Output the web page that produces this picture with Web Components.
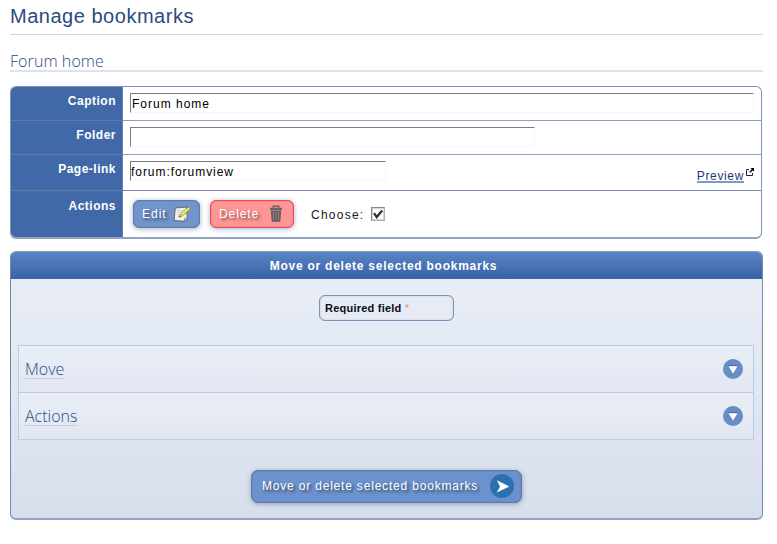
<!DOCTYPE html>
<html lang="en">
<head>
<meta charset="utf-8">
<title>Manage bookmarks</title>
<style>
html,body{margin:0;background:#fff}
body{width:777px;height:544px;overflow:hidden;font:12px/14px "Liberation Sans",Arial,sans-serif;color:#000}
</style>
</head>
<body>
<bookmark-page></bookmark-page>
<script>
function define(name, html) {
  const t = document.createElement('template');
  t.innerHTML = html;
  customElements.define(name, class extends HTMLElement {
    constructor() {
      super();
      this.attachShadow({mode: 'open'}).append(t.content.cloneNode(true));
    }
  });
}

define('page-title', `<style>
:host{display:block;box-sizing:border-box;height:35px;padding-top:4px;border-bottom:1px solid #c9d6ea;font-size:20px;line-height:24px;letter-spacing:.52px;color:#2b4b80}
</style><slot></slot>`);

define('section-title', `<style>
:host{display:block;box-sizing:border-box;height:20px;margin-top:17px;border-bottom:2px solid #dde2f1;font:300 16px/19px "Open Sans","Noto Sans",sans-serif;letter-spacing:.08px;color:#2b4b80}
</style><slot></slot>`);

define('field-table', `<style>
:host{display:block;box-sizing:border-box;width:752px;height:153px;margin-top:14px;border:1px solid #7f94b9;border-bottom:2px solid #91a3c3;border-radius:6px;overflow:hidden}
</style><slot></slot>`);

define('field-row', `<style>
:host{display:flex;box-sizing:border-box;height:34px;border-bottom:1px solid #8fa1c0}
:host([tall]){height:36px;border-bottom-color:#7388ae}
:host([last]){height:47px;border:0}
.label{box-sizing:border-box;flex:0 0 112px;background:#4169a8;border-right:1px solid #647ea8;color:#fff;font-weight:bold;text-align:right;padding:7px 6px 0 0;letter-spacing:.5px;box-shadow:0 1px #60799f}
:host([last]) .label{padding-top:8px;box-shadow:none}
.value{flex:1;display:flex;align-items:flex-start;padding:6px 7px 0 7px;min-width:0}
:host([last]) .value{padding:9px 0 0 10px}
</style><div class="label"><slot name="label"></slot></div><div class="value"><slot></slot></div>`);

define('text-field', `<style>
:host{display:block;flex:none;box-sizing:border-box;height:20px;padding:3px 0 0 1px;border:1px solid #f8f8f8;border-top-color:#7d7d7d;border-left-color:#7d7d7d;letter-spacing:1px;white-space:nowrap}
</style><slot></slot>`);

define('preview-link', `<style>
:host{display:flex;margin-left:auto;padding-top:7px;color:#1c3b76;letter-spacing:.65px}
span{height:12px;padding-top:1px;border-bottom:2px solid #8199c0}
svg{width:8px;height:8px;margin-left:2px}
</style><span><slot></slot></span><svg viewBox="0 0 8 8"><path d="M3 1.5H.5V7.5H6.5V5" fill="none" stroke="#222"/><path d="M4.5 0H8V3.5L6.8 2.4 4.2 4.8 3.3 3.9 5.7 1.2Z"/></svg>`);

define('action-button', `<style>
:host{display:flex;align-items:center;box-sizing:border-box;height:28px;padding:0 8px;justify-content:space-between;background:#7194cd;border:1px solid #647aa0;border-radius:6px;color:#fff;letter-spacing:1px;text-shadow:2px 2px 3px rgba(0,0,0,.55);box-shadow:0 1px 5px rgba(70,95,150,.5),inset 0 0 1px #53688f;white-space:nowrap}
:host([danger]){background:#ff9696;border-color:#e84a5a;letter-spacing:.9px;box-shadow:0 1px 5px rgba(70,95,150,.5),inset 0 0 1px #e02a40}
:host([large]){height:33px;background:#6b92cc;letter-spacing:.81px;padding:0 7px 1px 10px;border-radius:7px}
.text{display:block}
</style><span class="text"><slot></slot></span><slot name="icon"></slot>`);

define('icon-note', `<style>:host{display:block;width:18px;height:18px}svg{display:block}</style>
<svg width="18" height="18" viewBox="0 0 18 18"><path d="M2.2 3 13.5 2 14.3 14.8 11.5 16.3 1.2 15.5Z" fill="#f2f3f0" stroke="#5f6670"/><path d="M4 5.5 11 5M4 7.5 9 7.2M4 9.7 8 9.5M4 12 9 12" stroke="#cfd0cf"/><path d="M11 16.2 11.5 12.9 14.8 14.5Z" fill="#b7bcbf" stroke="#62676d" stroke-width=".5"/><path d="M6.2 12.2 7.6 8.5 15.2 2.2 17.3 4.3 9.6 10.8Z" fill="#dfdc35" stroke="#84852a" stroke-width=".6"/><path d="M8.3 9.3 16.2 3" stroke="#fffb91"/><path d="M15 2.3 16.2 1.4 17.8 3.3 17 4.4Z" fill="#999"/><path d="M6.2 12.2 6.7 10.8 7.7 11.5Z" fill="#222"/></svg>`);

define('icon-trash', `<style>:host{display:block;width:16px;height:18px}svg{display:block}</style>
<svg width="16" height="18" viewBox="0 0 16 18"><path d="M5.2 3V1.2H10.8V3" fill="none" stroke="#5e5a5c" stroke-width="1.2"/><path d="M2 2.8H14V5H2Z" fill="#686466"/><path d="M3 5.5H13L12.3 16.8H3.7Z" fill="#5c595b"/><path d="M5.4 6.5V15.5M8 6.5V15.5M10.6 6.5V15.5" stroke="#9c8789"/></svg>`);

define('icon-go', `<style>:host{display:block;width:24px;height:24px}svg{display:block}</style>
<svg width="24" height="24" viewBox="0 0 24 24"><circle cx="12" cy="12" r="12" fill="#2c71ae"/><path d="M6.8 6.3 19.3 12.5 6.8 18.5 10 12.5Z" fill="#fff"/></svg>`);

define('check-box', `<style>
:host{display:block;box-sizing:border-box;width:14px;height:14px;border:1px solid #888;border-right-color:#b1b1b1;border-bottom-color:#b1b1b1;background:#fff;box-shadow:inset 0 0 0 1px #d5d5d3}
svg{display:block}
</style><svg width="12" height="12" viewBox="0 0 12 12"><path d="M2 5.2 4.7 9 10.2 2.4" fill="none" stroke="#303030" stroke-width="2.3"/></svg>`);

define('action-panel', `<style>
:host{display:block;box-sizing:border-box;width:753px;height:269px;margin-top:12px;border:1px solid #7189b2;border-top-color:#8e9cb2;border-bottom:2px solid #91a3c2;border-radius:6px;background:linear-gradient(#e8ecf5 27px,#e2e9f3 40%,#d8dfec);overflow:hidden}
header{box-sizing:border-box;height:27px;padding:7px 6px 0 0;background:linear-gradient(#5885c5,#3961a5);color:#fff;font-weight:bold;text-align:center;letter-spacing:.75px}
.body{display:flex;flex-direction:column;padding:16px 8px 0 7px}
</style><header><slot name="title"></slot></header><div class="body"><slot></slot></div>`);

define('required-note', `<style>
:host{display:block;box-sizing:border-box;width:135px;height:26px;margin-left:301px;padding:5px 5px 0;border:1px solid #7e92b5;box-shadow:inset 0 0 1px #7e92b5;border-radius:6px;font-size:11px;font-weight:bold;letter-spacing:.23px;color:#080d18}
span{color:#e68d99;font-weight:normal}
</style><slot></slot> <span>*</span>`);

define('accordion-list', `<style>
:host{display:block;box-sizing:border-box;width:736px;margin-top:24px;border:1px solid #bdcae2;border-bottom:0}
</style><slot></slot>`);

define('accordion-item', `<style>
:host{display:flex;align-items:center;justify-content:space-between;box-sizing:border-box;height:47px;padding:0 10px 0 6px;border-bottom:1px solid #bdcae2;background:linear-gradient(#e9eef6,#e1e6f1);font:300 16px/20px "Open Sans","Noto Sans",sans-serif;color:#2b4b80}
span{box-sizing:border-box;height:20px;border-bottom:1px solid #bfcbe7}
svg{display:block}
</style><span><slot></slot></span><svg width="20" height="20" viewBox="0 0 20 20"><circle cx="10" cy="10" r="10" fill="#668dc4"/><path d="M5 6H15V7H5Z" fill="#4d72ae"/><path d="M5.5 7.2H14.5L10 14.5Z" fill="#fff"/></svg>`);

define('bookmark-page', `<style>
:host{display:block;width:753px;padding-left:10px}
#edit{width:67px}#del{width:84px;margin-left:10px;padding-right:9px}
#choose{display:block;margin:8px 0 0 17px;letter-spacing:1.25px;color:#101b2d}
#cb{margin:7px 0 0 7px}
#submit{width:271px;margin:30px 0 0 233px}
</style>
<page-title>Manage bookmarks</page-title>
<section-title>Forum home</section-title>
<field-table>
<field-row><span slot="label">Caption</span><text-field style="width:624px">Forum home</text-field></field-row>
<field-row><span slot="label">Folder</span><text-field style="width:405px"></text-field></field-row>
<field-row tall><span slot="label">Page-link</span><text-field style="width:256px;padding-left:0;letter-spacing:.95px">forum:forumview</text-field><preview-link>Preview</preview-link></field-row>
<field-row last><span slot="label">Actions</span><action-button id="edit">Edit<icon-note slot="icon"></icon-note></action-button><action-button id="del" danger>Delete<icon-trash slot="icon"></icon-trash></action-button><span id="choose">Choose:</span><check-box id="cb"></check-box></field-row>
</field-table>
<action-panel><span slot="title">Move or delete selected bookmarks</span>
<required-note>Required field</required-note>
<accordion-list><accordion-item>Move</accordion-item><accordion-item>Actions</accordion-item></accordion-list>
<action-button id="submit" large>Move or delete selected bookmarks<icon-go slot="icon"></icon-go></action-button>
</action-panel>`);
</script>
</body>
</html>
